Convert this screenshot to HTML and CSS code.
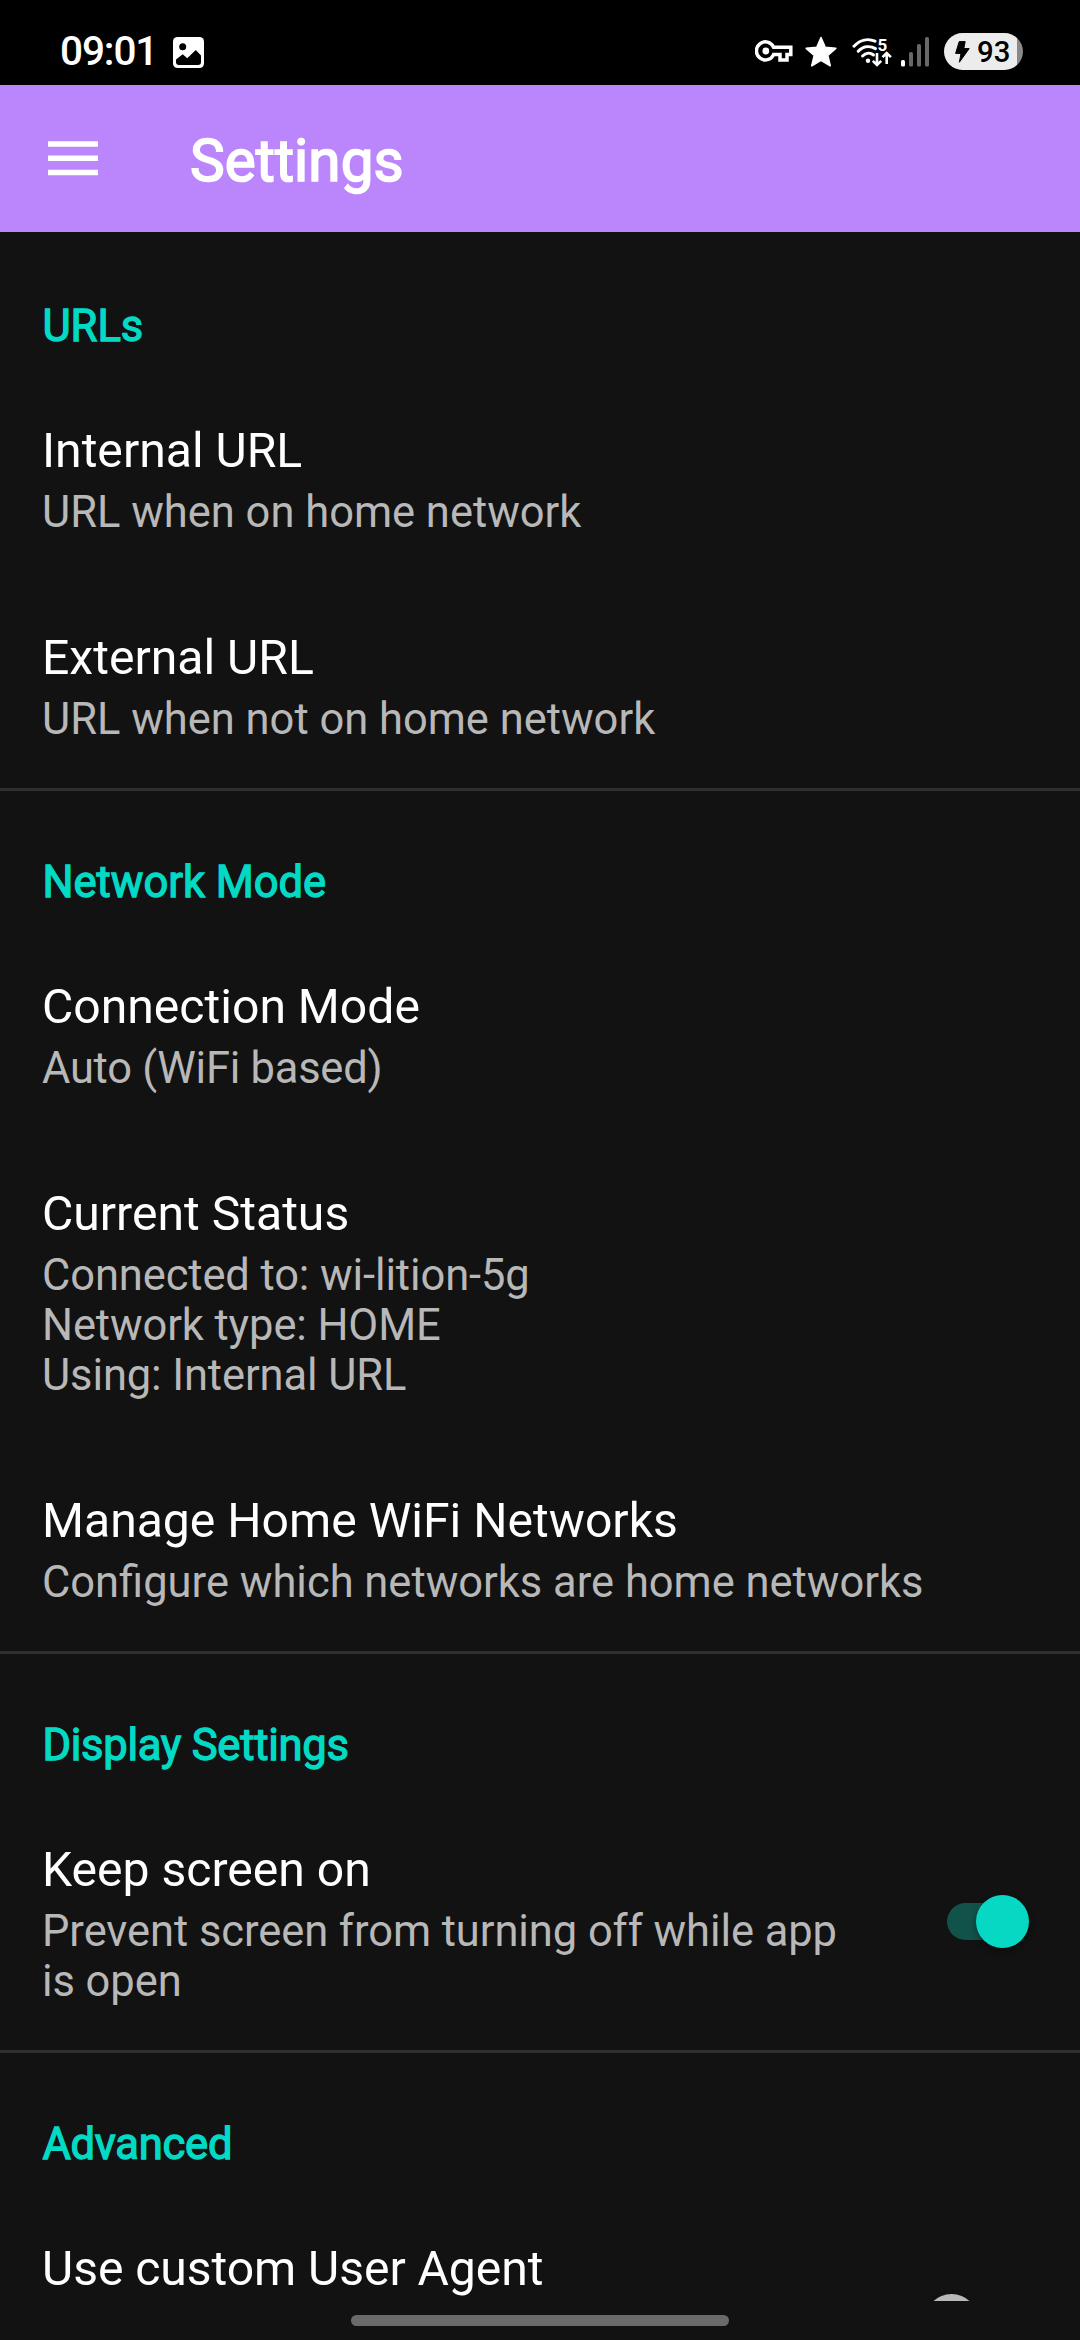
FILE: index.html
```html
<!DOCTYPE html>
<html lang="en">
<head>
<meta charset="utf-8">
<title>Settings</title>
<link rel="stylesheet" href="styles.css">
</head>
<body>
<div class="screen">
  <header class="status-bar">
    <div class="status-left">
      <span class="clock">09:01</span>
      <svg class="icon-image" width="31" height="31" viewBox="0 0 31 31">
        <rect width="31" height="31" rx="4.5" fill="#fff"/>
        <circle cx="9.7" cy="9.7" r="3.5" fill="#000"/>
        <path d="M3 22.5 9.7 17.3 14.2 21.3 22.8 13 28 18.5V25a3 3 0 0 1-3 3H6a3 3 0 0 1-3-3Z" fill="#000"/>
      </svg>
    </div>
    <div class="status-right">
      <svg class="icon-key" width="38" height="23" viewBox="0 0 38 23">
        <path d="M18.6 7.2H35.8V14.6H32V20H25V14.6H18.6A9 9 0 1 1 18.6 7.2Z" fill="none" stroke="#fff" stroke-width="3.5"/>
        <circle cx="10.8" cy="11" r="3.4" fill="#fff"/>
      </svg>
      <svg class="icon-star" width="32" height="32" viewBox="0 0 32 32">
        <path d="M16 1.5 20.2 11.3 30.8 12.3 22.8 19.4 25.2 29.8 16 24.4 6.8 29.8 9.2 19.4 1.2 12.3 11.8 11.3Z" fill="#fff" stroke="#fff" stroke-width="1.6" stroke-linejoin="round"/>
      </svg>
      <svg class="icon-wifi" width="41" height="34" viewBox="0 -4 41 34">
        <g fill="none" stroke="#fff" stroke-width="3" stroke-linecap="round">
          <path d="M2 8.2C8 1.8 16 .2 23 3.2"/>
          <path d="M6.2 13.3C11 8.4 17.5 7.2 23.5 10.6"/>
          <path d="M10.5 18C14 14.6 18.5 14.4 21.5 17"/>
        </g>
        <circle cx="16" cy="22.8" r="2.2" fill="#fff"/>
        <g fill="none" stroke="#fff" stroke-width="2.6">
          <path d="M25 15V27M20.8 22.8 25 27 29.2 22.8"/>
          <path d="M34.7 26V15M30.5 19.2 34.7 15 38.9 19.2"/>
        </g>
        <text class="wifi-band" x="25.6" y="13">5</text>
      </svg>
      <svg class="icon-signal" width="28" height="30" viewBox="0 0 28 30">
        <rect x="0" y="23" width="4" height="6.5" rx="1.5" fill="#fff"/>
        <rect x="8" y="15" width="4" height="14.5" rx="1.5" fill="#686868"/>
        <rect x="16" y="7" width="4" height="22.5" rx="1.5" fill="#686868"/>
        <rect x="24" y="0" width="4" height="29.5" rx="1.5" fill="#686868"/>
      </svg>
      <div class="battery">
        <svg class="icon-bolt" width="15" height="22" viewBox="0 0 15 22">
          <path d="M4.2.6H10.2L8.8 7.6H14.2L4.4 21.2 6 12.4H.6Z" fill="#000" stroke="#000" stroke-width="1" stroke-linejoin="round"/>
        </svg>
        <span class="battery-level">93</span>
      </div>
    </div>
  </header>

  <div class="app-bar">
    <svg class="icon-menu" width="50" height="35" viewBox="0 0 50 35">
      <path d="M0 3H50M0 17.2H50M0 31.4H50" stroke="#fff" stroke-width="5.5"/>
    </svg>
    <h1 class="app-title">Settings</h1>
  </div>

  <main class="settings">
    <section class="group">
      <h2 class="group-title">URLs</h2>
      <div class="pref"><div class="pref-text">
        <div class="pref-title">Internal URL</div>
        <div class="pref-summary">URL when on home network</div>
      </div></div>
      <div class="pref"><div class="pref-text">
        <div class="pref-title">External URL</div>
        <div class="pref-summary">URL when not on home network</div>
      </div></div>
    </section>

    <section class="group">
      <h2 class="group-title">Network Mode</h2>
      <div class="pref"><div class="pref-text">
        <div class="pref-title">Connection Mode</div>
        <div class="pref-summary tracking-tighter">Auto (WiFi based)</div>
      </div></div>
      <div class="pref"><div class="pref-text">
        <div class="pref-title">Current Status</div>
        <div class="pref-summary tracking-tight">Connected to: wi-lition-5g<br>Network type: HOME<br>Using: Internal URL</div>
      </div></div>
      <div class="pref"><div class="pref-text">
        <div class="pref-title">Manage Home WiFi Networks</div>
        <div class="pref-summary">Configure which networks are home networks</div>
      </div></div>
    </section>

    <section class="group">
      <h2 class="group-title tracking-tighter">Display Settings</h2>
      <div class="pref">
        <div class="pref-text">
          <div class="pref-title">Keep screen on</div>
          <div class="pref-summary tracking-snug">Prevent screen from turning off while app is open</div>
        </div>
        <div class="switch switch-on"><span class="thumb"></span></div>
      </div>
    </section>

    <section class="group">
      <h2 class="group-title tracking-tighter">Advanced</h2>
      <div class="pref pref-tall">
        <div class="pref-text">
          <div class="pref-title tracking-snug">Use custom User Agent</div>
        </div>
        <div class="switch"><span class="thumb"></span></div>
      </div>
    </section>
  </main>

  <footer class="nav-bar"><span class="nav-handle"></span></footer>
</div>
</body>
</html>
```
FILE: styles.css
```css
* { box-sizing: border-box; }

body {
  margin: 0;
  background: #121212;
  color: #fff;
  font-family: Roboto, sans-serif;
}

svg { display: block; flex: none; }

.screen {
  display: flex;
  flex-direction: column;
  width: 1080px;
  height: 2340px;
  overflow: hidden;
}

/* Status bar */
.status-bar {
  display: flex;
  justify-content: space-between;
  flex: none;
  height: 85px;
  padding: 0 57px 0 60px;
  background: #000;
}

.status-left,
.status-right { display: flex; align-items: flex-start; }

.clock {
  width: 113px;
  margin-top: 27px;
  font-size: 40.5px;
  line-height: 48px;
  font-weight: 500;
  letter-spacing: -1.1px;
}

.icon-image { margin-top: 37px; }
.icon-key { margin: 40px 12px 0 0; }
.icon-star { margin: 36px 15px 0 0; }
.icon-wifi { margin: 34px 8px 0 0; }
.icon-signal { margin: 37px 15px 0 0; }

.wifi-band {
  fill: #fff;
  font: 700 17px Roboto, sans-serif;
}

.battery {
  display: flex;
  align-items: center;
  width: 79px;
  height: 37px;
  margin-top: 33px;
  padding-left: 11px;
  border-radius: 19px;
  background: linear-gradient(90deg, #ececec 73px, #8a8a8a 73px);
  color: #000;
}

.battery-level {
  margin-left: 7px;
  font-size: 29.3px;
  line-height: 36px;
  font-weight: 500;
}

/* App bar */
.app-bar {
  display: flex;
  flex: none;
  height: 147px;
  padding-left: 48px;
  background: #bb86fc;
}

.icon-menu { margin-top: 56px; }

.app-title {
  margin: 42px 0 0 92px;
  font-size: 58.3px;
  line-height: 68px;
  font-weight: 400;
  letter-spacing: 0.1px;
  -webkit-text-stroke: 1.7px #fff;
}

/* Preference list */
.settings {
  flex: none;
  height: 2069px;
  overflow: hidden;
}

.group {
  padding: 67px 42px 43px;
  border-top: 3px solid #2f2f2f;
}

.group:first-child { border-top-color: transparent; }

.group-title {
  margin: 0 0 71px 0.4px;
  color: #03dac5;
  font-size: 43.5px;
  line-height: 50px;
  font-weight: 400;
  -webkit-text-stroke: 1.3px #03dac5;
}

.tracking-snug { letter-spacing: -0.06px; }
.tracking-tight { letter-spacing: -0.1px; }
.tracking-tighter { letter-spacing: -0.24px; }

.pref {
  display: flex;
  align-items: center;
  justify-content: space-between;
}

.pref + .pref { margin-top: 92px; }

.pref-tall { height: 165px; align-items: flex-start; }
.pref-tall .switch { align-self: center; }

.pref-text { max-width: 900px; }
.pref:has(.switch) .pref-text { max-width: 815px; }

.pref-title {
  margin-bottom: 9px;
  font-size: 48.1px;
  line-height: 56px;
}

.pref-summary {
  color: #b8b8b8;
  font-size: 43.47px;
  line-height: 50px;
}

.switch {
  display: flex;
  align-items: center;
  flex: none;
  width: 74px;
  height: 37px;
  margin: 0 17px 6px 0;
  border-radius: 19px;
  background: #4d4d4d;
}

.thumb {
  flex: none;
  width: 53px;
  height: 53px;
  margin-left: -22px;
  border-radius: 50%;
  background: #b9b9b9;
  box-shadow: 0 3px 6px rgba(0, 0, 0, 0.35);
}

.switch-on { background: #11524a; }

.switch-on .thumb {
  margin-left: 29px;
  background: #06d8c4;
}

/* Gesture bar */
.nav-bar {
  display: flex;
  justify-content: center;
  flex: 1;
  padding-top: 14px;
}

.nav-handle {
  width: 378px;
  height: 11px;
  border-radius: 6px;
  background: #6a6a6a;
}
```
